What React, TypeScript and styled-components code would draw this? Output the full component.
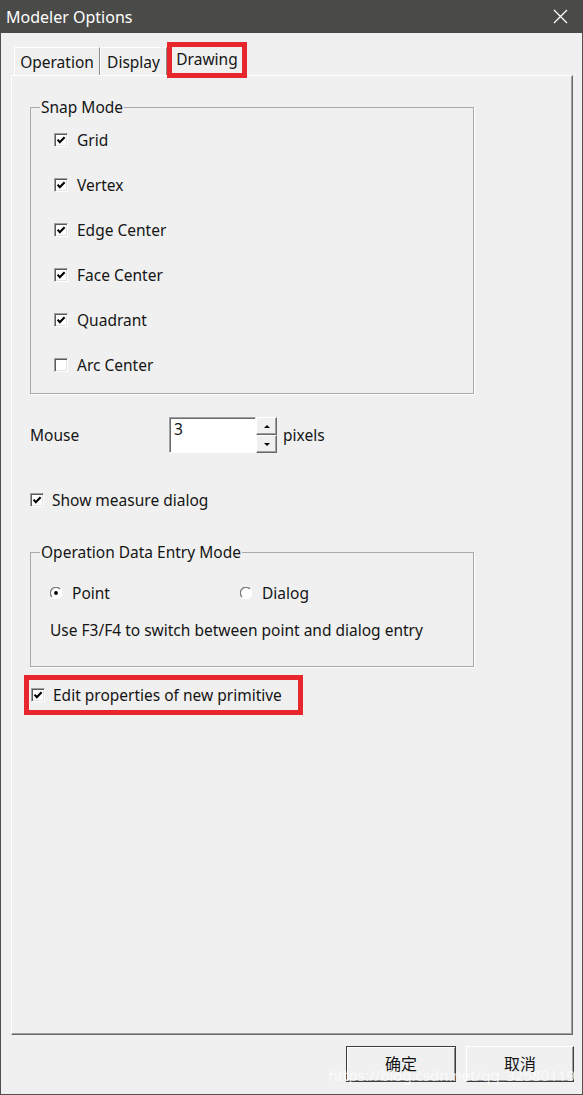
import styled, { createGlobalStyle } from 'styled-components';

const GlobalStyle = createGlobalStyle`
  html, body {
    margin: 0;
    padding: 0;
    background: #f0f0f0;
  }
  body {
    font-family: "Noto Sans", "Noto Sans CJK SC", sans-serif;
  }
`;

const Window = styled.div`
  position: relative;
  width: 583px;
  height: 1095px;
  display: flex;
  flex-direction: column;
  background: #f0f0f0;
  color: #151515;
  font-size: 15.5px;
  overflow: hidden;
`;

const TitleBar = styled.div`
  height: 33px;
  flex: none;
  background: #4a4a48;
  color: #fff;
  display: flex;
  align-items: center;
  justify-content: space-between;
  padding: 0 15px 0 6px;
  font-size: 16px;
`;

const CloseIcon = () => (
  <svg width="15" height="15" viewBox="0 0 15 15">
    <path d="M1 1 L14 14 M14 1 L1 14" stroke="#fff" strokeWidth="1.3" />
  </svg>
);

const Frame = styled.div`
  flex: 1;
  display: flex;
  flex-direction: column;
  border: 1px solid #505050;
  border-top: none;
  padding: 0 9px 0 10px;
  min-height: 0;
`;

const TabRow = styled.div`
  display: flex;
  align-items: flex-start;
  height: 28px;
  margin-top: 14px;
  padding-left: 3px;
`;

const Tab = styled.div<{ $width: number; $active?: boolean }>`
  box-sizing: border-box;
  width: ${(p) => p.$width}px;
  height: 28px;
  display: flex;
  align-items: center;
  justify-content: center;
  border-top: 1px solid #fff;
  border-left: 1px solid #fff;
  border-right: 1px solid #8a8a8a;
  ${(p) =>
    p.$active &&
    `
    position: relative;
    z-index: 1;
    height: 36px;
    margin-top: -5px;
    border: 5px solid #e8262b;
    background: #f0f0f0;
    padding-bottom: 3px;
  `}
`;

const Panel = styled.div`
  flex: 1;
  box-sizing: border-box;
  border-top: 1px solid #fff;
  border-left: 1px solid #fff;
  border-right: 1px solid #696969;
  border-bottom: 1px solid #696969;
  box-shadow: inset -1px -1px 0 #a0a0a0;
  padding: 21px 0 0 18px;
  display: flex;
  flex-direction: column;
  align-items: flex-start;
`;

const GroupBox = styled.fieldset<{ $top?: number }>`
  box-sizing: border-box;
  width: 444px;
  margin: ${(p) => p.$top ?? 0}px 0 0 0;
  padding: 0;
  min-width: 0;
  border: 1px solid #a9a9a9;
  box-shadow: 1px 1px 0 #fff;
`;

const Legend = styled.legend`
  margin-left: 9px;
  padding: 0 1px;
  line-height: 20px;
`;

const GroupBody = styled.div<{ $left: number; $bottom: number }>`
  padding: 0 0 ${(p) => p.$bottom}px ${(p) => p.$left}px;
  display: flex;
  flex-direction: column;
`;

const CheckRow = styled.div<{ $height?: number; $gap?: number; $top?: number }>`
  height: ${(p) => p.$height ?? 20}px;
  margin-top: ${(p) => p.$top ?? 0}px;
  display: flex;
  align-items: center;
  gap: ${(p) => p.$gap ?? 10}px;
  line-height: 20px;
  white-space: nowrap;
`;

const Box = styled.span`
  box-sizing: border-box;
  flex: none;
  width: 14px;
  height: 14px;
  border-top: 1px solid #a0a0a0;
  border-left: 1px solid #a0a0a0;
  border-right: 1px solid #fff;
  border-bottom: 1px solid #fff;
  box-shadow: inset 1px 1px 0 #5a5a5a, inset -1px -1px 0 #e3e3e3;
  background: #fff;
  display: flex;
  align-items: center;
  justify-content: center;
`;

const CheckBox = ({ checked }: { checked?: boolean }) => (
  <Box>
    {checked && (
      <svg width="10" height="10" viewBox="0 0 10 10">
        <polyline points="1.6,4.6 3.8,7.2 8.6,2.2" fill="none" stroke="#000" strokeWidth="2.1" />
      </svg>
    )}
  </Box>
);

const Radio = ({ checked }: { checked?: boolean }) => (
  <svg width="12" height="12" viewBox="0 0 12 12" style={{ flex: 'none' }}>
    <circle cx="6" cy="6" r="5.2" fill="#fff" />
    <path d="M10 2 A5.2 5.2 0 0 0 2 10" fill="none" stroke="#7a7a7a" strokeWidth="1.3" />
    <path d="M2 10 A5.2 5.2 0 0 0 10 2" fill="none" stroke="#fff" strokeWidth="1.3" />
    {checked && <circle cx="6" cy="6" r="1.9" fill="#000" />}
  </svg>
);

const MouseRow = styled.div`
  margin-top: 23px;
  height: 36px;
  display: flex;
  align-items: center;
`;

const FieldLabel = styled.span`
  width: 139px;
  flex: none;
`;

const NumberInput = styled.div`
  box-sizing: border-box;
  width: 87px;
  height: 36px;
  background: #fff;
  border-top: 1px solid #a0a0a0;
  border-left: 1px solid #a0a0a0;
  border-right: 1px solid #fff;
  border-bottom: 1px solid #fff;
  box-shadow: inset 1px 1px 0 #6a6a6a;
  padding: 1px 4px;
  line-height: 20px;
`;

const Spinner = styled.div`
  display: flex;
  flex-direction: column;
  width: 21px;
  height: 36px;
`;

const SpinButton = styled.div<{ $down?: boolean }>`
  box-sizing: border-box;
  height: 18px;
  border-top: 1px solid #fff;
  border-left: 1px solid #fff;
  border-right: 1px solid #696969;
  border-bottom: 1px solid #696969;
  box-shadow: inset -1px -1px 0 #a0a0a0;
  display: flex;
  align-items: center;
  justify-content: center;

  &::after {
    content: '';
    border-left: 3px solid transparent;
    border-right: 3px solid transparent;
    ${(p) => (p.$down ? 'border-top: 3px solid #000;' : 'border-bottom: 3px solid #000;')}
  }
`;

const Unit = styled.span`
  margin-left: 6px;
`;

const RadioRow = styled.div`
  margin-top: 21px;
  height: 20px;
  display: flex;
  align-items: center;
`;

const RadioOption = styled.div<{ $width?: number }>`
  display: flex;
  align-items: center;
  gap: 10px;
  width: ${(p) => (p.$width ? `${p.$width}px` : 'auto')};
  line-height: 20px;
`;

const Hint = styled.div`
  margin-top: 17px;
  line-height: 20px;
  white-space: nowrap;
`;

const Highlight = styled.div`
  box-sizing: border-box;
  margin: 8px 0 0 -6px;
  width: 279px;
  height: 40px;
  border: 5px solid #e8262b;
  padding-left: 2px;
  display: flex;
  align-items: center;
  gap: 8px;
  white-space: nowrap;
`;

const Footer = styled.div`
  display: flex;
  justify-content: flex-end;
  gap: 10px;
  margin: 11px -1px 12px 0;
`;

const Button = styled.div<{ $default?: boolean }>`
  box-sizing: border-box;
  width: ${(p) => (p.$default ? 110 : 108)}px;
  height: 36px;
  display: flex;
  align-items: flex-start;
  justify-content: center;
  padding-top: 5px;
  font-family: "Noto Sans CJK SC", sans-serif;
  font-size: 16px;
  line-height: 22px;
  background: #f0f0f0;
  border-top: 1px solid ${(p) => (p.$default ? '#3c3c3c' : '#fff')};
  border-left: 1px solid ${(p) => (p.$default ? '#3c3c3c' : '#fff')};
  border-right: 1px solid #3c3c3c;
  border-bottom: 1px solid #3c3c3c;
  box-shadow: ${(p) =>
    p.$default ? 'inset 1px 1px 0 #fff, inset -1px -1px 0 #8a8a8a' : 'inset -1px -1px 0 #a0a0a0'};
`;

const Watermark = styled.div`
  position: absolute;
  right: 8px;
  bottom: 12px;
  color: rgba(255, 255, 255, 0.75);
  font-size: 15px;
  line-height: 16px;
  pointer-events: none;
`;

const snapItems = [
  { label: 'Grid', checked: true },
  { label: 'Vertex', checked: true },
  { label: 'Edge Center', checked: true },
  { label: 'Face Center', checked: true },
  { label: 'Quadrant', checked: true },
  { label: 'Arc Center', checked: false },
];

export default function App() {
  return (
    <Window>
      <GlobalStyle />
      <TitleBar>
        <span>Modeler Options</span>
        <CloseIcon />
      </TitleBar>
      <Frame>
        <TabRow>
          <Tab $width={86}>Operation</Tab>
          <Tab $width={67}>Display</Tab>
          <Tab $width={80} $active>
            Drawing
          </Tab>
        </TabRow>
        <Panel>
          <GroupBox>
            <Legend>Snap Mode</Legend>
            <GroupBody $left={23} $bottom={6}>
              {snapItems.map((item) => (
                <CheckRow key={item.label} $height={45} $gap={9}>
                  <CheckBox checked={item.checked} />
                  <span>{item.label}</span>
                </CheckRow>
              ))}
            </GroupBody>
          </GroupBox>

          <MouseRow>
            <FieldLabel>Mouse</FieldLabel>
            <NumberInput>3</NumberInput>
            <Spinner>
              <SpinButton />
              <SpinButton $down />
            </Spinner>
            <Unit>pixels</Unit>
          </MouseRow>

          <CheckRow $top={37} $gap={8}>
            <CheckBox checked />
            <span>Show measure dialog</span>
          </CheckRow>

          <GroupBox $top={32}>
            <Legend>Operation Data Entry Mode</Legend>
            <GroupBody $left={19} $bottom={26}>
              <RadioRow>
                <RadioOption $width={190}>
                  <Radio checked />
                  <span>Point</span>
                </RadioOption>
                <RadioOption>
                  <Radio />
                  <span>Dialog</span>
                </RadioOption>
              </RadioRow>
              <Hint>Use F3/F4 to switch between point and dialog entry</Hint>
            </GroupBody>
          </GroupBox>

          <Highlight>
            <CheckBox checked />
            <span>Edit properties of new primitive</span>
          </Highlight>
        </Panel>
        <Footer>
          <Button $default>确定</Button>
          <Button>取消</Button>
        </Footer>
      </Frame>
      <Watermark>https://blog.csdn.net/qq_32580119</Watermark>
    </Window>
  );
}
